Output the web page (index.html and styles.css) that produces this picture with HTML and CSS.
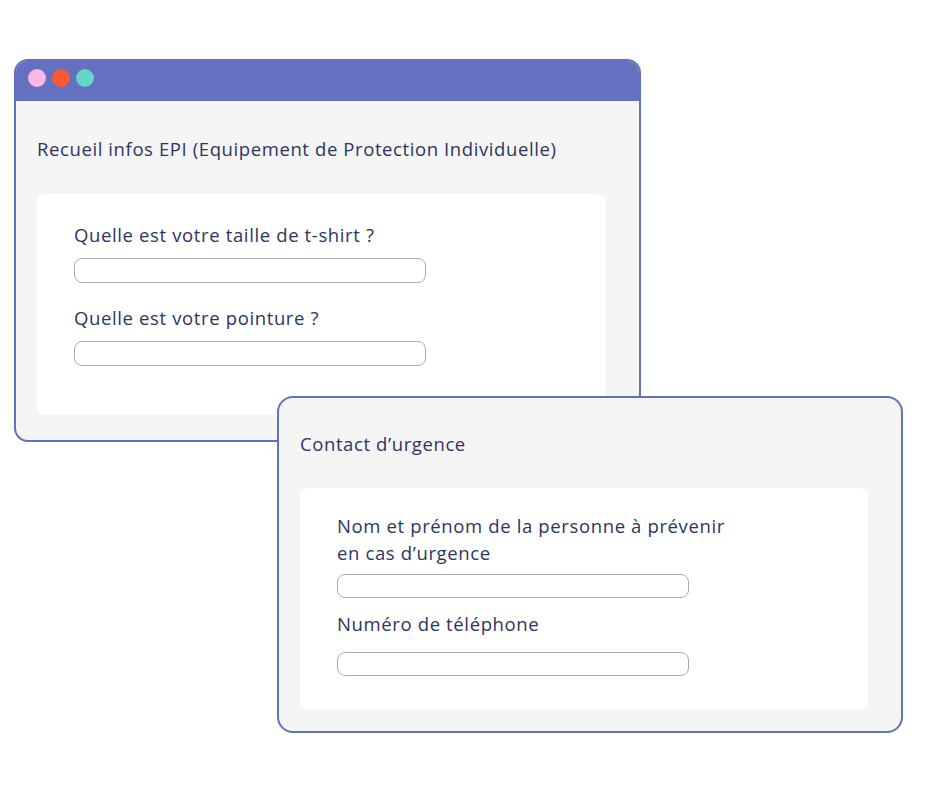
FILE: index.html
```html
<!DOCTYPE html>
<html lang="fr">
<head>
    <meta charset="UTF-8">
    <meta name="viewport" content="width=device-width, initial-scale=1.0">
    <title>Formulaires</title>
    <link rel="stylesheet" href="styles.css">
</head>
<body>
    <div class="desk">
        <!-- Fenetre 1 : infos EPI -->
        <section class="window window-epi">
            <div class="titlebar">
                <span class="dot dot-pink"></span>
                <span class="dot dot-red"></span>
                <span class="dot dot-teal"></span>
            </div>
            <div class="window-body">
                <h2 class="window-title">Recueil infos EPI (Equipement de Protection Individuelle)</h2>
                <div class="card">
                    <div class="field">
                        <label for="tshirt">Quelle est votre taille de t-shirt ?</label>
                        <input id="tshirt" type="text">
                    </div>
                    <div class="field">
                        <label for="pointure">Quelle est votre pointure ?</label>
                        <input id="pointure" type="text">
                    </div>
                </div>
            </div>
        </section>

        <!-- Fenetre 2 : contact d'urgence -->
        <section class="window window-contact">
            <div class="window-body">
                <h2 class="window-title">Contact d’urgence</h2>
                <div class="card">
                    <div class="field">
                        <label for="nom">Nom et prénom de la personne à prévenir<br>en cas d’urgence</label>
                        <input id="nom" type="text">
                    </div>
                    <div class="field field-tel">
                        <label for="tel">Numéro de téléphone</label>
                        <input id="tel" type="text">
                    </div>
                </div>
            </div>
        </section>
    </div>
</body>
</html>
```

FILE: styles.css
```css
* {
    margin: 0;
    padding: 0;
    box-sizing: border-box;
}

body {
    font-family: 'Open Sans', 'Noto Sans', sans-serif;
    background-color: #fff;
    color: #2d3561;
    width: 940px;
    height: 788px;
    overflow: hidden;
}

.desk {
    position: relative;
    width: 940px;
    height: 788px;
}

/* les deux fenetres se chevauchent */
.window {
    position: absolute;
    background-color: #f5f5f5;
    border: 2px solid #6470c0;
    overflow: hidden;
}

.window-epi {
    left: 14px;
    top: 59px;
    width: 627px;
    height: 383px;
    border-radius: 14px;
}

.window-contact {
    left: 277px;
    top: 396px;
    width: 626px;
    height: 337px;
    border-radius: 16px;
}

.titlebar {
    height: 40px;
    background-color: #6470c0;
    display: flex;
    align-items: center;
    gap: 6px;
    padding-left: 12px;
    padding-bottom: 6px;
}

.dot {
    width: 18px;
    height: 18px;
    border-radius: 50%;
}

.dot-pink { background-color: #fab6e7; }
.dot-red { background-color: #fd5a34; }
.dot-teal { background-color: #65d5c4; }

.window-body {
    padding: 34px 0 0 21px;
}

.window-contact .window-body {
    padding-top: 32px;
}

.window-title {
    font-size: 18.5px;
    font-weight: 400;
    line-height: 27px;
    letter-spacing: 0.6px;
    margin-bottom: 32px;
}

.window-contact .window-title {
    margin-bottom: 31px;
}

.card {
    background-color: #fff;
    border-radius: 8px;
    width: 569px;
    height: 221px;
    padding: 27px 0 0 37px;
}

.window-contact .card {
    width: 568px;
    padding-top: 24px;
}

.field {
    margin-bottom: 21px;
}

.window-contact .field {
    margin-bottom: 12px;
}

.field label {
    display: block;
    font-size: 18.5px;
    line-height: 27px;
    letter-spacing: 0.63px;
    margin-bottom: 10px;
}

.window-contact .field label {
    margin-bottom: 8px;
}

.window-contact .field-tel label {
    margin-bottom: 15px;
}

.field input {
    display: block;
    width: 352px;
    height: 25px;
    border: 1px solid #a8aab8;
    border-radius: 8px;
    background-color: #fff;
}

.window-contact .field input {
    height: 24px;
}
```
